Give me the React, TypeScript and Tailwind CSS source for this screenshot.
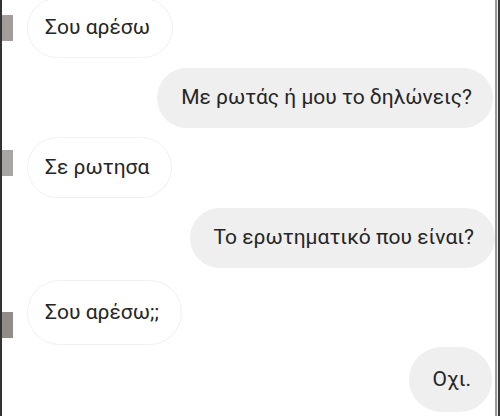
import React from 'react';

interface BubbleProps {
  text: string;
  mine?: boolean;
  height: string;
}

const Bubble: React.FC<BubbleProps> = ({ text, mine, height }) => (
  <div
    className={`${height} flex items-center rounded-full text-[21px] text-[#252525] whitespace-nowrap ${
      mine ? 'bg-[#efefef] pl-[24px] pr-[21px]' : 'bg-white border border-[#f0f0f0] pl-[17px] pr-[22px]'
    }`}
    style={{ fontFamily: 'Roboto, "Noto Sans", sans-serif' }}
  >
    {text}
  </div>
);

interface LeftRowProps {
  text: string;
  height: string;
  squareTop: string;
  squareColor: string;
  className?: string;
}

const LeftRow: React.FC<LeftRowProps> = ({ text, height, squareTop, squareColor, className }) => (
  <div className={`flex items-start ${className ?? ''}`}>
    <div className={`w-[11px] h-[26px] ${squareTop} ${squareColor}`} />
    <div className="ml-[14px]">
      <Bubble text={text} height={height} />
    </div>
  </div>
);

export default function App() {
  return (
    <div className="w-[500px] h-[416px] bg-white flex overflow-hidden">
      <div className="w-[2px] bg-[#333333]" />
      <div className="flex-1 flex flex-col">
        <LeftRow
          text="Σου αρέσω"
          height="h-[60px]"
          squareTop="mt-[17px]"
          squareColor="bg-[#a29c9a]"
          className="mt-[-2px]"
        />
        <div className="flex justify-end mt-[10px] mr-[2px]">
          <Bubble text="Με ρωτάς ή μου το δηλώνεις?" mine height="h-[60px]" />
        </div>
        <LeftRow
          text="Σε ρωτησα"
          height="h-[61px]"
          squareTop="mt-[13px]"
          squareColor="bg-[#a8a5a5]"
          className="mt-[9px]"
        />
        <div className="flex justify-end mt-[10px]">
          <Bubble text="Το ερωτηματικό που είναι?" mine height="h-[60px]" />
        </div>
        <LeftRow
          text="Σου αρέσω;;"
          height="h-[65px]"
          squareTop="mt-[32px]"
          squareColor="bg-[#918b89]"
          className="mt-[12px]"
        />
        <div className="flex justify-end mt-[2px] mr-[3px]">
          <Bubble text="Οχι." mine height="h-[65px]" />
        </div>
      </div>
      <div className="w-[2px] bg-[#9a9a9a]" />
      <div className="w-[1px] bg-[#e8e8e8]" />
      <div className="w-[2px] bg-[#3a3a3a]" />
    </div>
  );
}
